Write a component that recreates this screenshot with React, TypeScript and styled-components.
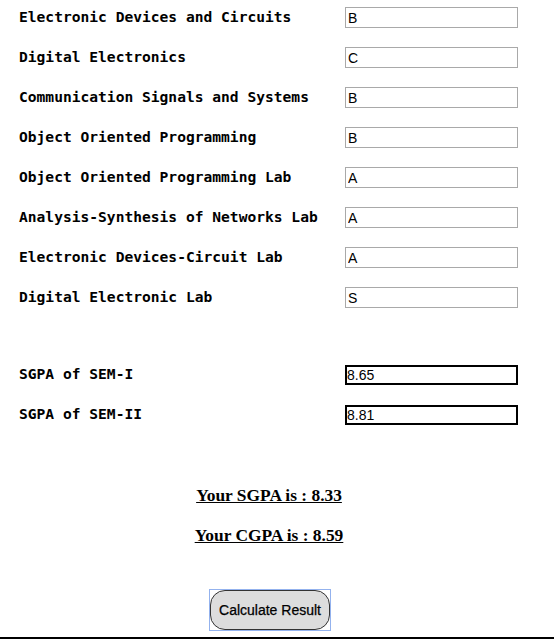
import styled, { createGlobalStyle } from "styled-components";

const subjects = [
  { name: "Electronic Devices and Circuits", grade: "B" },
  { name: "Digital Electronics", grade: "C" },
  { name: "Communication Signals and Systems", grade: "B" },
  { name: "Object Oriented Programming", grade: "B" },
  { name: "Object Oriented Programming Lab", grade: "A" },
  { name: "Analysis-Synthesis of Networks Lab", grade: "A" },
  { name: "Electronic Devices-Circuit Lab", grade: "A" },
  { name: "Digital Electronic Lab", grade: "S" },
];

const previous = [
  { name: "SGPA of SEM-I", value: "8.65" },
  { name: "SGPA of SEM-II", value: "8.81" },
];

const App = () => {
  return (
    <>
      <GlobalStyle />
      <Page>
        <Form>
          {subjects.map((s) => (
            <Row key={s.name}>
              <Label>{s.name}</Label>
              <GradeInput defaultValue={s.grade} />
            </Row>
          ))}
        </Form>
        <Form $top={56}>
          {previous.map((p) => (
            <Row key={p.name}>
              <Label>{p.name}</Label>
              <GradeInput $strong defaultValue={p.value} />
            </Row>
          ))}
        </Form>
        <Results>
          <Result>Your SGPA is : 8.33</Result>
          <Result>Your CGPA is : 8.59</Result>
        </Results>
        <ButtonRow>
          <ButtonFrame>
            <CalcButton>Calculate Result</CalcButton>
          </ButtonFrame>
        </ButtonRow>
        <Footer />
      </Page>
    </>
  );
};

export default App;

const GlobalStyle = createGlobalStyle`
  body {
    margin: 0;
    background: #fff;
  }
`;

const Page = styled.div`
  width: 554px;
  height: 640px;
  overflow: hidden;
  display: flex;
  flex-direction: column;
`;

const Form = styled.div<{ $top?: number }>`
  display: flex;
  flex-direction: column;
  gap: 19px;
  padding-left: 19px;
  margin-top: ${(props) => props.$top ?? 7}px;
`;

const Row = styled.div`
  display: grid;
  grid-template-columns: 326px 173px;
  align-items: center;
  height: 21px;
`;

const Label = styled.span`
  font-family: "DejaVu Sans Mono", monospace;
  font-weight: 700;
  font-size: 14.6px;
  line-height: 19px;
  color: #000;
  white-space: nowrap;
  margin-bottom: 2px;
`;

const GradeInput = styled.input<{ $strong?: boolean }>`
  box-sizing: border-box;
  width: 173px;
  height: ${(props) => (props.$strong ? 20 : 21)}px;
  margin: 0;
  padding: 1px 2px;
  border: ${(props) => (props.$strong ? "2px solid #000" : "1px solid #a9a9a9")};
  font-family: "Liberation Sans", Arial, sans-serif;
  font-size: 14px;
  color: #000;
  background: #fff;
  outline: none;
  ${(props) => props.$strong && "padding-left: 0;"}
`;

const Results = styled.div`
  margin-top: 59px;
  display: flex;
  flex-direction: column;
  align-items: center;
  gap: 17px;
`;

const Result = styled.div`
  font-family: "Liberation Serif", "Times New Roman", serif;
  font-weight: 700;
  font-size: 17.4px;
  line-height: 23px;
  text-decoration: underline;
  color: #000;
  transform: translateX(-8px);
`;

const ButtonRow = styled.div`
  margin-top: 42px;
  display: flex;
  justify-content: center;
  padding-right: 14px;
`;

const ButtonFrame = styled.div`
  border: 1px solid #93b2ee;
  display: flex;
`;

const CalcButton = styled.button`
  width: 120px;
  height: 40px;
  border: 1px solid #333;
  border-radius: 15px;
  background: #dddddd;
  font-family: "Liberation Sans", Arial, sans-serif;
  font-size: 14px;
  color: #000;
  -webkit-text-stroke: 0.25px #000;
  padding: 0;
  cursor: pointer;
`;

const Footer = styled.div`
  margin-top: 6px;
  border-top: 2px solid #000;
  height: 10px;
`;
